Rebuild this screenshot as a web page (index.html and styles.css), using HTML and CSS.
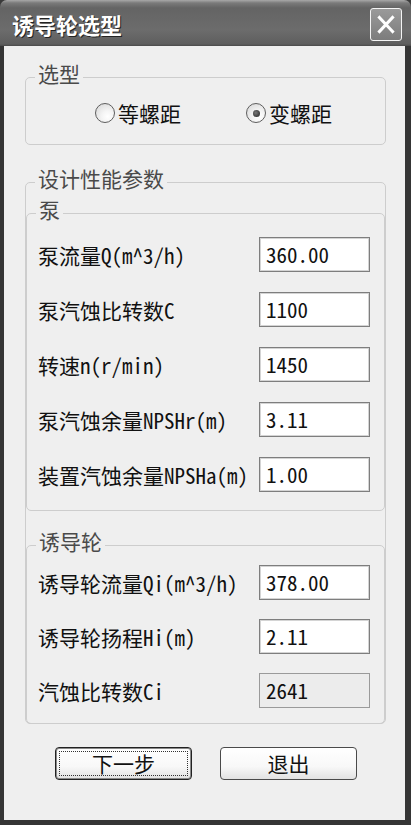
FILE: index.html
```html
<!DOCTYPE html>
<html lang="zh-CN">
<head>
<meta charset="utf-8">
<title>诱导轮选型</title>
<link rel="stylesheet" href="styles.css">
</head>
<body>
<div class="window">
  <div class="titlebar">
    <span class="title">诱导轮选型</span>
    <span class="close">
      <svg width="32" height="33" viewBox="0 0 32 33"><path d="M9 9 L23 24 M23 9 L9 24" stroke="#fff" stroke-width="3.2" stroke-linecap="square"/></svg>
    </span>
  </div>
  <div class="frame">
    <div class="client">
      <div class="group g-type">
        <div class="group-title">选型</div>
        <div class="radios">
          <label class="radio-item"><span class="radio"></span><span>等螺距</span></label>
          <label class="radio-item"><span class="radio checked"></span><span>变螺距</span></label>
        </div>
      </div>

      <div class="group g-design">
        <div class="group-title">设计性能参数</div>
        <div class="group g-pump">
          <div class="group-title">泵</div>
          <div class="rows">
            <div class="row"><span class="lbl">泵流量Q(m^3/h)</span><span class="box">360.00</span></div>
            <div class="row"><span class="lbl">泵汽蚀比转数C</span><span class="box">1100</span></div>
            <div class="row"><span class="lbl">转速n(r/min)</span><span class="box">1450</span></div>
            <div class="row"><span class="lbl">泵汽蚀余量NPSHr(m)</span><span class="box">3.11</span></div>
            <div class="row"><span class="lbl">装置汽蚀余量NPSHa(m)</span><span class="box">1.00</span></div>
          </div>
        </div>
        <div class="group g-inducer">
          <div class="group-title">诱导轮</div>
          <div class="rows rows-ind">
            <div class="row"><span class="lbl">诱导轮流量Qi(m^3/h)</span><span class="box">378.00</span></div>
            <div class="row"><span class="lbl">诱导轮扬程Hi(m)</span><span class="box">2.11</span></div>
            <div class="row"><span class="lbl">汽蚀比转数Ci</span><span class="box disabled">2641</span></div>
          </div>
        </div>
      </div>

      <div class="buttons">
        <button class="btn default"><span class="focus">下一步</span></button>
        <button class="btn">退出</button>
      </div>
    </div>
  </div>
</div>
</body>
</html>
```
FILE: styles.css
```css
* { box-sizing: border-box; }
html, body { margin: 0; padding: 0; }
body {
  background: #3a3a3a;
  font-family: "Noto Sans Mono CJK SC", "Noto Sans CJK SC", sans-serif;
  font-size: 21px;
  color: #111;
}
.window {
  width: 411px;
  height: 825px;
  display: flex;
  flex-direction: column;
}
.titlebar {
  height: 46px;
  flex: none;
  display: flex;
  align-items: center;
  justify-content: space-between;
  padding: 0 9px 0 12px;
  border-radius: 7px 7px 0 0;
  background: linear-gradient(to bottom, #a8a8a8 0, #7a7a7a 3px, #646464 8px, #6c6c6c 30px, #5e5e5e 44px, #4a4a4a 46px);
}
.title {
  color: #fff;
  font-family: "Noto Sans CJK SC", sans-serif;
  font-weight: 700;
  font-size: 22px;
  line-height: 24px;
  text-shadow: 1px 1px 0 #222;
  margin-top: 2px;
}
.close {
  width: 32px;
  height: 33px;
  border: 1px solid #f4f4f4;
  border-radius: 3px;
  background: linear-gradient(to bottom, #9a9a9a, #7c7c7c);
  display: flex;
  align-items: center;
  justify-content: center;
  margin-top: 2px;
}
.close svg { display: block; }
.frame {
  flex: 1;
  display: flex;
  border-left: 4px solid #353535;
  border-right: 6px solid #353535;
  border-bottom: 5px solid #353535;
}
.client {
  flex: 1;
  background: #efefef;
  padding: 31px 19px 0 21px;
}
.group {
  border: 1px solid #cdcdcd;
  border-radius: 5px;
}
.group-title {
  width: max-content;
  margin: -17px 0 0 9px;
  padding: 0 3px;
  line-height: 24px;
  background: #efefef;
  color: #4a4a4a;
}
.g-type { padding-bottom: 19px; }
.radios {
  display: flex;
  gap: 65px;
  padding-left: 69px;
  margin-top: 16px;
  line-height: 24px;
}
.radio-item {
  display: flex;
  align-items: center;
  gap: 3px;
}
.radio {
  width: 20px;
  height: 20px;
  border-radius: 50%;
  border: 1px solid #5e5e5e;
  background: radial-gradient(circle at 65% 70%, #ffffff 0, #f4f4f4 35%, #d4d4d4 100%);
  display: flex;
  align-items: center;
  justify-content: center;
}
.radio.checked::after {
  content: "";
  width: 7px;
  height: 7px;
  border-radius: 50%;
  background: radial-gradient(circle at 40% 40%, #777, #222);
}
.g-design { margin-top: 37px; }
.g-pump { margin-top: 23px; padding-bottom: 18px; }
.g-inducer { margin-top: 34px; padding-bottom: 15px; margin-bottom: -1px; }
.rows {
  display: flex;
  flex-direction: column;
  gap: 20px;
  margin-top: 16px;
  padding: 0 14px 0 11px;
}
.rows-ind { gap: 19px; margin-top: 12px; }
.row {
  display: flex;
  align-items: center;
  justify-content: space-between;
  height: 35px;
}
.lbl { white-space: nowrap; }
.box {
  width: 111px;
  height: 35px;
  background: #fff;
  border: 1px solid #7e7e7e;
  box-shadow: inset 0 0 0 1px #d4d4d4;
  padding-left: 6px;
  line-height: 33px;
  font-size: 21px;
}
.box.disabled {
  background: #ececec;
  box-shadow: none;
  border-color: #9a9a9a;
}
.buttons {
  display: flex;
  gap: 28px;
  margin-top: 23px;
  padding-left: 30px;
}
.btn {
  width: 137px;
  height: 33px;
  font: inherit;
  color: #111;
  border: 1px solid #4a4a4a;
  border-radius: 4px;
  background: linear-gradient(to bottom, #ffffff 0, #f8f8f8 60%, #e2e2e2 100%);
  padding: 0;
  line-height: 29px;
  display: flex;
  align-items: center;
  justify-content: center;
}
.btn.default {
  border: 1px solid #222;
  box-shadow: inset 0 0 0 1px #8a8a8a;
  padding: 3px;
}
.focus {
  flex: 1;
  align-self: stretch;
  border: 1px dotted #333;
  display: flex;
  align-items: center;
  justify-content: center;
}
```
